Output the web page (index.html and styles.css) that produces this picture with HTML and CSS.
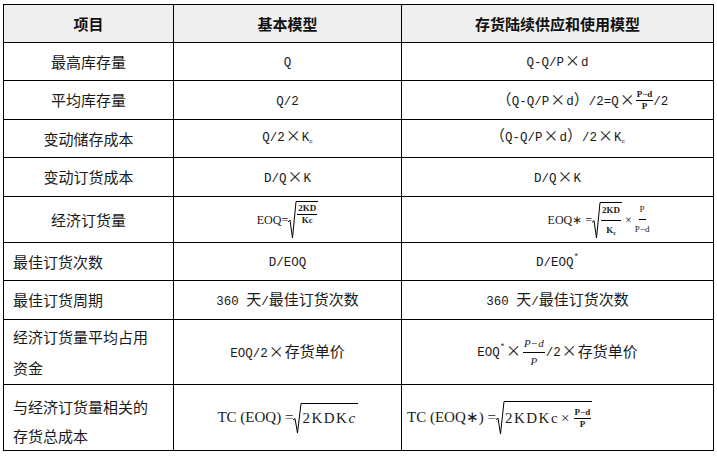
FILE: index.html
```html
<!DOCTYPE html>
<html lang="zh-CN">
<head>
<meta charset="utf-8">
<title>存货模型对比</title>
<link rel="stylesheet" href="styles.css">
</head>
<body>
<table class="grid">
  <colgroup><col class="c1"><col class="c2"><col class="c3"></colgroup>
  <thead>
    <tr class="h38 head"><th>项目</th><th>基本模型</th><th>存货陆续供应和使用模型</th></tr>
  </thead>
  <tbody>
    <tr class="h38">
      <td class="name">最高库存量</td>
      <td><span class="m">Q</span></td>
      <td><span class="m">Q-Q/P<span class="x">×</span>d</span></td>
    </tr>
    <tr class="h39">
      <td class="name">平均库存量</td>
      <td><span class="m">Q/2</span></td>
      <td class="shift-a">（<span class="m">Q-Q/P<span class="x">×</span>d</span>）<span class="m">/2=Q<span class="x">×</span></span><span class="frac fb small"><span class="num">P−d</span><span class="den">P</span></span><span class="m">/2</span></td>
    </tr>
    <tr class="h38">
      <td class="name">变动储存成本</td>
      <td><span class="m">Q/2<span class="x">×</span>K<sub class="tiny">c</sub></span></td>
      <td>（<span class="m">Q-Q/P<span class="x">×</span>d</span>）<span class="m">/2<span class="x">×</span>K<sub class="tiny">c</sub></span></td>
    </tr>
    <tr class="h39">
      <td class="name">变动订货成本</td>
      <td><span class="m">D/Q<span class="x">×</span>K</span></td>
      <td><span class="m">D/Q<span class="x">×</span>K</span></td>
    </tr>
    <tr class="h46">
      <td class="name">经济订货量</td>
      <td><span class="eq">EOQ=</span><span class="sqrt tall"><svg viewBox="0 0 8 30" preserveAspectRatio="none"><path d="M0 17 L2 15.5 L4.5 30 L8 0.5"/></svg><span class="rad top"><span class="frac fb small"><span class="num">2KD</span><span class="den">Kc</span></span></span></span></td>
      <td class="shift-b"><span class="eq">EOQ∗ =</span><span class="sqrt tall"><svg viewBox="0 0 8 30" preserveAspectRatio="none"><path d="M0 17 L2 15.5 L4.5 30 L8 0.5"/></svg><span class="rad"><span class="frac fb small roomy"><span class="num">2KD</span><span class="den">K<sub class="tiny">c</sub></span></span></span></span><span class="eq times">×</span><span class="frac small roomy"><span class="num">P</span><span class="den">P−d</span></span></td>
    </tr>
    <tr class="h38">
      <td class="name left">最佳订货次数</td>
      <td><span class="m">D/EOQ</span></td>
      <td><span class="m">D/EOQ<sup class="star">*</sup></span></td>
    </tr>
    <tr class="h39">
      <td class="name left">最佳订货周期</td>
      <td><span class="m">360 </span>天<span class="m">/</span>最佳订货次数</td>
      <td><span class="m">360 </span>天<span class="m">/</span>最佳订货次数</td>
    </tr>
    <tr class="h65">
      <td class="name left two">经济订货量平均占用<br>资金</td>
      <td><span class="m">EOQ/2<span class="x">×</span></span>存货单价</td>
      <td><span class="m">EOQ<sup class="star">*</sup><span class="x">×</span></span><span class="frac it"><span class="num">P−d</span><span class="den">P</span></span><span class="m">/2<span class="x">×</span></span>存货单价</td>
    </tr>
    <tr class="h67">
      <td class="name left two low">与经济订货量相关的<br>存货总成本</td>
      <td><span class="eq big">TC (EOQ) =</span><span class="sqrt"><svg viewBox="0 0 8 30" preserveAspectRatio="none"><path d="M0 17 L2 15.5 L4.5 30 L8 0.5"/></svg><span class="rad"><span class="eq big wide">2KDK<i>c</i></span></span></span></td>
      <td class="left-f"><span class="eq big">TC (EOQ∗) =</span><span class="sqrt mid"><svg viewBox="0 0 8 30" preserveAspectRatio="none"><path d="M0 17 L2 15.5 L4.5 30 L8 0.5"/></svg><span class="rad"><span class="eq big wide">2KDKc</span><span class="eq big gap">×</span><span class="frac fb small"><span class="num">P−d</span><span class="den">P</span></span></span></span></td>
    </tr>
  </tbody>
</table>
</body>
</html>
```

FILE: styles.css
```css
html, body {
  margin: 0;
  padding: 0;
  background: #ffffff;
}

.grid {
  margin: 4px 0 0 3px;
  width: 710px;
  table-layout: fixed;
  border-collapse: collapse;
  font-family: "Noto Sans CJK SC", sans-serif;
  font-size: 15px;
  color: #1a1a1a;
}

.c1 { width: 170px; }
.c2 { width: 228px; }
.c3 { width: 312px; }

.grid th,
.grid td {
  border: 1px solid #000;
  padding: 0;
  text-align: center;
  vertical-align: middle;
  white-space: nowrap;
  line-height: 20px;
}

.head th {
  background: #efefef;
  font-weight: bold;
  color: #111;
}

.h38 { height: 38px; }
.h39 { height: 39px; }
.h46 { height: 46px; }
.h65 { height: 65px; }
.h67 { height: 66px; }

.grid td.name.left {
  text-align: left;
  padding-left: 9px;
}

.grid td.name.two { line-height: 31px; }
.grid td.name.low { line-height: 29px; padding-top: 6px; }

.grid td.shift-a { padding-left: 50px; }
.grid td.shift-b { padding-left: 82px; }
.grid td.left-f { text-align: left; padding-left: 5px; }

.m {
  font-family: "Liberation Mono", monospace;
  font-size: 12.5px;
}

.x {
  font-family: "Noto Sans CJK SC", sans-serif;
  font-size: 15px;
  margin: 0 1px;
}

.tiny {
  font-size: 6px;
  vertical-align: -2px;
}

.star {
  font-size: 9px;
  vertical-align: 6px;
  line-height: 0;
}

.eq {
  font-family: "Liberation Serif", serif;
  font-size: 12px;
}

.eq.big { font-size: 15px; }
.eq.wide { letter-spacing: 1.5px; }
.eq.times { margin: 0 3px; }
.eq.gap { margin: 0 4px 0 2px; }

.frac {
  display: inline-flex;
  flex-direction: column;
  align-items: center;
  vertical-align: middle;
  font-family: "Liberation Serif", serif;
  line-height: 1;
}

.frac .num {
  border-bottom: 1px solid #000;
  padding: 0 1px 1px;
}

.frac .den { padding-top: 1px; }

.frac.small { font-size: 9px; }
.frac.fb { font-weight: bold; }
.frac.roomy .num { padding-bottom: 5px; }
.frac.roomy .den { padding-top: 5px; }

.frac.it {
  font-style: italic;
  font-size: 11px;
  margin: 0 1px;
}
.frac.it .num { padding-bottom: 3px; }
.frac.it .den { padding-top: 3px; }

.sqrt {
  display: inline-flex;
  align-items: stretch;
  vertical-align: middle;
}

.sqrt svg {
  width: 8px;
  flex: none;
  overflow: visible;
}

.sqrt path {
  fill: none;
  stroke: #000;
  stroke-width: 1;
  vector-effect: non-scaling-stroke;
}

.rad {
  border-top: 1px solid #000;
  display: inline-flex;
  align-items: center;
  padding: 1px 1px 0 1px;
  line-height: 1;
}

.sqrt.tall .rad { height: 34px; }
.sqrt.tall .rad.top { align-items: flex-start; padding-top: 2px; }
.sqrt.mid .rad { height: 31px; }
```
